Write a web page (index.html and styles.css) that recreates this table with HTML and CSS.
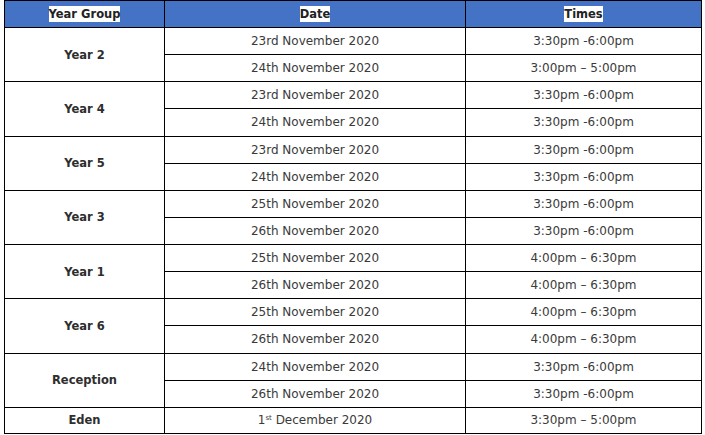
FILE: index.html
```html
<!DOCTYPE html>
<html>
<head>
<meta charset="utf-8">
<link rel="stylesheet" href="styles.css">
</head>
<body>
<table class="schedule">
  <colgroup>
    <col class="c-group">
    <col class="c-date">
    <col class="c-time">
  </colgroup>
  <thead>
    <tr><th><span class="hl">Year Group</span></th><th><span class="hl">Date</span></th><th><span class="hl">Times</span></th></tr>
  </thead>
  <tbody>
    <tr><td class="grp" rowspan="2">Year 2</td><td>23rd November 2020</td><td>3:30pm -6:00pm</td></tr>
    <tr><td>24th November 2020</td><td>3:00pm – 5:00pm</td></tr>
    <tr><td class="grp" rowspan="2">Year 4</td><td>23rd November 2020</td><td>3:30pm -6:00pm</td></tr>
    <tr><td>24th November 2020</td><td>3:30pm -6:00pm</td></tr>
    <tr><td class="grp" rowspan="2">Year 5</td><td>23rd November 2020</td><td>3:30pm -6:00pm</td></tr>
    <tr><td>24th November 2020</td><td>3:30pm -6:00pm</td></tr>
    <tr><td class="grp" rowspan="2">Year 3</td><td>25th November 2020</td><td>3:30pm -6:00pm</td></tr>
    <tr><td>26th November 2020</td><td>3:30pm -6:00pm</td></tr>
    <tr><td class="grp" rowspan="2">Year 1</td><td>25th November 2020</td><td>4:00pm – 6:30pm</td></tr>
    <tr><td>26th November 2020</td><td>4:00pm – 6:30pm</td></tr>
    <tr><td class="grp" rowspan="2">Year 6</td><td>25th November 2020</td><td>4:00pm – 6:30pm</td></tr>
    <tr><td>26th November 2020</td><td>4:00pm – 6:30pm</td></tr>
    <tr><td class="grp" rowspan="2">Reception</td><td>24th November 2020</td><td>3:30pm -6:00pm</td></tr>
    <tr><td>26th November 2020</td><td>3:30pm -6:00pm</td></tr>
    <tr class="last"><td class="grp">Eden</td><td>1<sup>st</sup> December 2020</td><td>3:30pm – 5:00pm</td></tr>
  </tbody>
</table>
</body>
</html>
```
FILE: styles.css
```css
html, body {
  margin: 0;
  padding: 0;
  background: #ffffff;
}
body {
  padding-left: 4px;
  font-family: "DejaVu Sans", sans-serif;
}
.schedule {
  border-collapse: collapse;
  table-layout: fixed;
  width: 697px;
}
.c-group { width: 160px; }
.c-date { width: 301px; }
.c-time { width: 236px; }
.schedule th,
.schedule td {
  border: 1px solid #000;
  height: 26.14px;
  padding: 0;
  text-align: center;
  vertical-align: middle;
  font-size: 12px;
  color: #3a3a3a;
  line-height: 14px;
}
.schedule th {
  height: 26px;
  background: #4472c4;
  font-weight: bold;
  color: #222;
  font-size: 11.5px;
}
.schedule .last td {
  height: 25px;
}
.hl {
  background: #ffffff;
  padding: 1px 0;
}
.schedule td.grp {
  font-weight: bold;
  color: #2e2e2e;
  font-size: 11.5px;
}
sup {
  font-size: 7px;
  line-height: 0;
  vertical-align: 4px;
}
```
